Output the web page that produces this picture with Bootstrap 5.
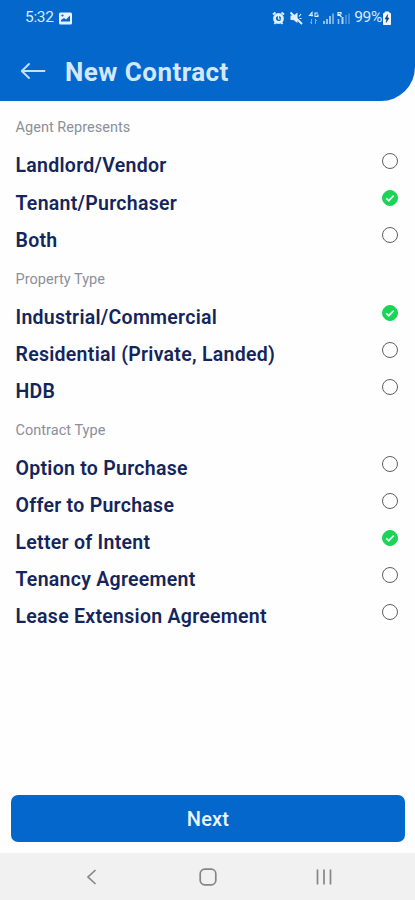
<!DOCTYPE html>
<html lang="en">
<head>
<meta charset="utf-8">
<meta name="viewport" content="width=device-width, initial-scale=1">
<title>New Contract</title>
<link rel="stylesheet" href="https://cdn.jsdelivr.net/npm/bootstrap@5.3.0/dist/css/bootstrap.min.css">
<style>
body{font-family:Roboto,"Liberation Sans",sans-serif;background:#fefefe;height:900px;overflow:hidden}
.app-header{background:#0467cb;height:101px;border-bottom-right-radius:34px;color:#d3e8ff}
.status-bar{height:35px;padding:1px 23px 0 25px;font-size:15.5px;color:#d9ebff}
.status-bar svg,.title-bar svg{display:block;flex:none}
.clock{letter-spacing:-.3px}
.title-bar{height:66px;padding:7px 20px 0;gap:19px}
.title-bar svg{margin-top:-2px}
.title-bar h1{font-size:26px;font-weight:700;line-height:1;letter-spacing:.46px}
.options{padding:6.5px 17px 0 15.5px}
.group-label{height:40px;padding-top:1px;font-size:14.5px;color:#8b8f9b;letter-spacing:.03px;font-weight:400}
.option{height:37.1px;font-size:19.5px;font-weight:600;color:#14255b;letter-spacing:.28px;cursor:pointer}
.option .form-check-input{width:16px;height:16px;margin:0 0 9.6px;border:1.4px solid #5f5f63;background-color:#fff;box-shadow:none}
.option .form-check-input:checked{border-color:#19d456;background-color:#19d456;background-image:none}
.radio-wrap{position:relative}
.radio-wrap svg{position:absolute;left:0;top:0;pointer-events:none}
.next-btn{height:47px;background:#0467cb;color:#eaf5ff;font-size:20px;font-weight:500;border:0;border-radius:7px;letter-spacing:.2px}
.next-btn:hover{background:#0458b0;color:#fff}
.action{padding:0 10px 11px 11px}
.system-nav{height:47px;background:#f1f1f1;padding:0 82px 0 84px}
</style>
<script src="https://cdn.jsdelivr.net/npm/bootstrap@5.3.0/dist/js/bootstrap.bundle.min.js"></script>
</head>
<body class="d-flex flex-column m-0">
<header class="app-header">
  <div class="status-bar d-flex align-items-center justify-content-between">
    <div class="d-flex align-items-center">
      <span class="clock">5:32</span>
      <svg class="ms-1" width="15" height="13" viewBox="0 0 15 13"><rect x="1" y=".5" width="13" height="12" rx="1.5" fill="#e8f5ff"/><path d="M3 9.500V8l3-2 2 1.500 4-4v6z" fill="#0467cb"/><circle cx="4.500" cy="3.500" r="1.100" fill="#0467cb"/></svg>
    </div>
    <div class="d-flex align-items-center">
      <svg width="82" height="16" viewBox="0 0 82 16" fill="none" stroke="#e0f0ff">
        <circle cx="6.500" cy="8.500" r="4" stroke-width="2.800"/><path d="M6.500 6v3h2" stroke-width="1.200"/><path d="M1 4.500 3.500 2.500M12 4.500 9.500 2.500M2.500 14l1.500-2M10.500 14 9 12" stroke-width="2"/>
        <path d="M18.500 5.500h3l4-3v10.500l-4-3h-3z" fill="#e0f0ff" stroke="none"/><path d="M18.500 2.500 30 14" stroke-width="2"/><path d="M27 6.500l2-2.500M27.500 8.500h2" stroke-width="1.200"/>
        <path d="M40 6.500V2.500L37.500 5.500H41M46 3H43v3.500h3V5H44.500" stroke-width="1.100"/><path d="M39.500 9v5M43.500 9v5M38 12l1.500 1.500M45 11l-1.500-1.500" stroke-width="1" opacity=".5"/>
        <path d="M52 11v3M55 9v5M58 6v8" stroke-width="2" opacity=".65"/><path d="M61 3.500v10.500" stroke-width="1.600" opacity=".6"/>
        <path d="M66 6V2.500h3V4l-2 .5L69.500 7" stroke-width="1.200"/><path d="M66.500 9v5" stroke-width="1.500" opacity=".7"/><path d="M70.500 7v7" stroke-width="2" opacity=".8"/><path d="M74 5v9M77 3.500v10.500" stroke-width="1.200" opacity=".45"/>
      </svg>
      <span class="clock">99%</span>
      <svg width="10" height="14" viewBox="0 0 10 14"><path d="M3 1h4v1.500h1.500v11h-7v-11H3z" fill="#f0f8ff" stroke="#f0f8ff" stroke-linejoin="round"/><path d="M5.700 3.500 3 8h1.600L4.200 11.500 7 7H5.300z" fill="#123e73" stroke="#123e73" stroke-width=".5"/></svg>
    </div>
  </div>
  <div class="title-bar d-flex align-items-center">
    <svg width="26" height="18" viewBox="0 0 26 18" fill="none" stroke="#c5e0fc" stroke-width="1.900" stroke-linecap="round" stroke-linejoin="round"><path d="M24.500 9H2M9 2 1.800 9 9 16"/></svg>
    <h1 class="m-0">New Contract</h1>
  </div>
</header>

<main class="options flex-grow-1">
  <section>
    <h2 class="group-label d-flex align-items-center m-0">Agent Represents</h2>
    <label class="option d-flex align-items-center justify-content-between">Landlord/Vendor<input class="form-check-input" type="radio" name="agent"></label>
    <label class="option d-flex align-items-center justify-content-between">Tenant/Purchaser<span class="radio-wrap d-flex"><input class="form-check-input" type="radio" name="agent" checked><svg width="16" height="16" viewBox="0 0 16 16" fill="none" stroke="#e9fff0" stroke-width="1.800"><path d="M4.200 8.300 6.800 10.700 11.800 5.500"/></svg></span></label>
    <label class="option d-flex align-items-center justify-content-between">Both<input class="form-check-input" type="radio" name="agent"></label>
  </section>
  <section>
    <h2 class="group-label d-flex align-items-center m-0">Property Type</h2>
    <label class="option d-flex align-items-center justify-content-between">Industrial/Commercial<span class="radio-wrap d-flex"><input class="form-check-input" type="radio" name="property" checked><svg width="16" height="16" viewBox="0 0 16 16" fill="none" stroke="#e9fff0" stroke-width="1.800"><path d="M4.200 8.300 6.800 10.700 11.800 5.500"/></svg></span></label>
    <label class="option d-flex align-items-center justify-content-between">Residential (Private, Landed)<input class="form-check-input" type="radio" name="property"></label>
    <label class="option d-flex align-items-center justify-content-between">HDB<input class="form-check-input" type="radio" name="property"></label>
  </section>
  <section>
    <h2 class="group-label d-flex align-items-center m-0">Contract Type</h2>
    <label class="option d-flex align-items-center justify-content-between">Option to Purchase<input class="form-check-input" type="radio" name="contract"></label>
    <label class="option d-flex align-items-center justify-content-between">Offer to Purchase<input class="form-check-input" type="radio" name="contract"></label>
    <label class="option d-flex align-items-center justify-content-between">Letter of Intent<span class="radio-wrap d-flex"><input class="form-check-input" type="radio" name="contract" checked><svg width="16" height="16" viewBox="0 0 16 16" fill="none" stroke="#e9fff0" stroke-width="1.800"><path d="M4.200 8.300 6.800 10.700 11.800 5.500"/></svg></span></label>
    <label class="option d-flex align-items-center justify-content-between">Tenancy Agreement<input class="form-check-input" type="radio" name="contract"></label>
    <label class="option d-flex align-items-center justify-content-between">Lease Extension Agreement<input class="form-check-input" type="radio" name="contract"></label>
  </section>
</main>

<div class="action"><button class="btn next-btn w-100 d-flex align-items-center justify-content-center p-0" type="button">Next</button></div>
<nav class="system-nav d-flex align-items-center justify-content-between" aria-label="System">
  <svg width="16" height="18" viewBox="0 0 16 18" fill="none" stroke="#868686" stroke-width="1.700"><path d="M11.500 2 4 9l7.500 7"/></svg>
  <svg width="18" height="18" viewBox="0 0 18 18" fill="none" stroke="#868686" stroke-width="1.700"><rect x="1.200" y="1.200" width="15.600" height="15.600" rx="4.500"/></svg>
  <svg width="18" height="18" viewBox="0 0 18 18" fill="none" stroke="#868686" stroke-width="1.700"><path d="M2.500 1.500v15M9 1.500v15M15.500 1.500v15"/></svg>
</nav>
</body>
</html>
